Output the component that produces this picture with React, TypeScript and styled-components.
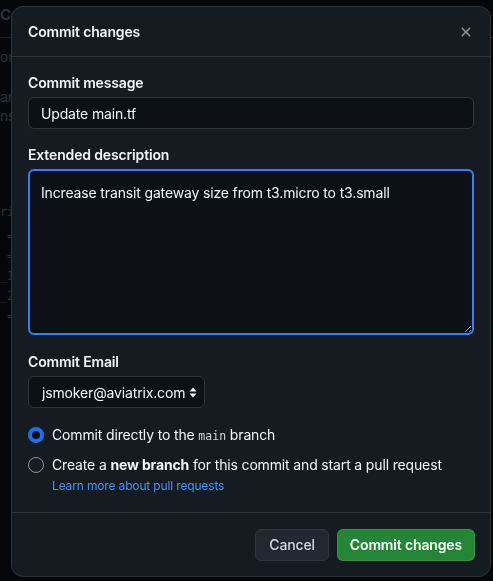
import React from "react";
import styled, { createGlobalStyle } from "styled-components";

const GlobalStyle = createGlobalStyle`
  html, body {
    margin: 0;
    padding: 0;
    background: #05070b;
    color-scheme: dark;
  }
  body {
    font-family: Inter, "Noto Sans", "Liberation Sans", sans-serif;
    letter-spacing: -0.15px;
    width: 493px;
    height: 581px;
    overflow: hidden;
  }
`;

const BgPage = styled.div`
  width: 493px;
  height: 581px;
  overflow: hidden;
  background: #05070b;
  color: #2c3139;
  display: flex;
  flex-direction: column;
  font-size: 14px;
`;

const BgTitle = styled.div`
  font-size: 15px;
  font-weight: 700;
  line-height: 20px;
  margin: 5px 0 0 0;
  white-space: nowrap;
`;

const BgRule = styled.div`
  height: 1px;
  background: #1a1e25;
  margin-top: 12px;
`;

const BgLine = styled.div<{ $top: number }>`
  margin-top: ${(p) => p.$top}px;
  line-height: 20px;
  white-space: nowrap;
`;

const BgCode = styled.div<{ $top: number }>`
  margin-top: ${(p) => p.$top}px;
  font-family: "DejaVu Sans Mono", "Liberation Mono", monospace;
  font-size: 12px;
  line-height: 20px;
  white-space: pre;
`;

const Dialog = styled.div`
  position: fixed;
  left: 11px;
  top: 6px;
  width: 480px;
  height: 571px;
  box-sizing: border-box;
  background: #161b22;
  border: 1px solid #2d333b;
  border-radius: 12px;
  display: flex;
  flex-direction: column;
  color: #f0f6fc;
  overflow: hidden;
`;

const Header = styled.div`
  display: flex;
  align-items: center;
  justify-content: space-between;
  height: 49px;
  padding: 0 16px;
  border-bottom: 1px solid #2d333b;
  flex-shrink: 0;
`;

const Title = styled.h1`
  margin: 0;
  font-size: 14px;
  font-weight: 600;
  line-height: 20px;
`;

const CloseButton = styled.button`
  width: 16px;
  height: 16px;
  padding: 0;
  border: 0;
  background: transparent;
  color: #9198a1;
  display: flex;
  align-items: center;
  justify-content: center;
  margin-top: 1px;
`;

const Body = styled.div`
  flex: 1;
  padding: 16px 16px 0 16px;
  display: flex;
  flex-direction: column;
`;

const Field = styled.div<{ $gap?: number }>`
  display: flex;
  flex-direction: column;
  margin-bottom: ${(p) => p.$gap ?? 16}px;
`;

const Label = styled.label`
  font-size: 14px;
  font-weight: 600;
  line-height: 20px;
  margin-bottom: 4px;
  color: #f0f6fc;
`;

const TextInput = styled.input`
  height: 32px;
  box-sizing: border-box;
  background: #0d1117;
  border: 1px solid #30363d;
  border-radius: 6px;
  padding: 0 12px;
  color: #f0f6fc;
  font: inherit;
  font-size: 14px;
  letter-spacing: -0.15px;
  outline: none;
`;

const TextArea = styled.textarea`
  height: 166px;
  box-sizing: border-box;
  background: #0d1117;
  border: 2px solid #2f81f7;
  border-radius: 6px;
  padding: 12px 11px;
  color: #f0f6fc;
  font: inherit;
  font-size: 14px;
  line-height: 20px;
  letter-spacing: -0.15px;
  outline: none;
  resize: vertical;
  caret-color: #f0f6fc;
`;

const Select = styled.div`
  align-self: flex-start;
  height: 32px;
  box-sizing: border-box;
  background: #0d1117;
  border: 1px solid #30363d;
  border-radius: 6px;
  padding: 0 7px 0 13px;
  display: flex;
  align-items: center;
  gap: 4px;
  font-size: 14px;
  color: #f0f6fc;
`;

const RadioRow = styled.div<{ $mb: number }>`
  display: flex;
  align-items: flex-start;
  gap: 8px;
  margin-bottom: ${(p) => p.$mb}px;
`;

const Radio = styled.span<{ $checked?: boolean }>`
  width: 16px;
  height: 16px;
  box-sizing: border-box;
  border-radius: 50%;
  margin-top: 2px;
  flex-shrink: 0;
  border: ${(p) => (p.$checked ? "4px solid #1f6feb" : "1px solid #8b919a")};
  background: ${(p) => (p.$checked ? "#0d1117" : "transparent")};
`;

const RadioText = styled.div`
  display: flex;
  flex-direction: column;
`;

const RadioLabel = styled.span`
  font-size: 14px;
  line-height: 20px;
  color: #f0f6fc;
  white-space: nowrap;
`;

const Code = styled.code`
  font-family: "DejaVu Sans Mono", "Liberation Mono", monospace;
  font-size: 11.5px;
  letter-spacing: 0;
  color: #d1d7e0;
`;

const Link = styled.a`
  font-size: 12px;
  line-height: 18px;
  margin-top: 2px;
  color: #4493f8;
  text-decoration: none;
`;

const Footer = styled.div`
  height: 64px;
  box-sizing: border-box;
  border-top: 1px solid #2d333b;
  padding: 0 15px;
  display: flex;
  align-items: center;
  justify-content: flex-end;
  gap: 8px;
  flex-shrink: 0;
`;

const Button = styled.button<{ $primary?: boolean }>`
  height: 32px;
  padding: 0 ${(p) => (p.$primary ? 12 : 13)}px;
  border-radius: 6px;
  font-family: inherit;
  letter-spacing: -0.15px;
  font-size: 14px;
  font-weight: ${(p) => (p.$primary ? 600 : 500)};
  color: ${(p) => (p.$primary ? "#ffffff" : "#d1d7e0")};
  background: ${(p) => (p.$primary ? "#238636" : "#212830")};
  border: 1px solid ${(p) => (p.$primary ? "rgba(240,246,252,0.1)" : "#30363d")};
`;

const XIcon = () => (
  <svg width="16" height="16" viewBox="0 0 16 16" fill="currentColor">
    <path d="M3.72 3.72a.75.75 0 0 1 1.06 0L8 6.94l3.22-3.22a.749.749 0 0 1 1.275.326.749.749 0 0 1-.215.734L9.06 8l3.22 3.22a.749.749 0 0 1-.326 1.275.749.749 0 0 1-.734-.215L8 9.06l-3.22 3.22a.751.751 0 0 1-1.042-.018.751.751 0 0 1-.018-1.042L6.94 8 3.72 4.78a.75.75 0 0 1 0-1.06Z" />
  </svg>
);

const UpDownIcon = () => (
  <svg width="8" height="11" viewBox="0 0 8 11" fill="#f0f6fc">
    <path d="M4 0.5 L7.5 4.5 H0.5 Z" />
    <path d="M4 10.5 L0.5 6.5 H7.5 Z" />
  </svg>
);

export default function App() {
  const taRef = React.useRef<HTMLTextAreaElement>(null);
  React.useEffect(() => {
    const el = taRef.current;
    if (el) {
      el.focus();
      const n = el.value.length;
      el.setSelectionRange(n, n);
    }
  }, []);
  return (
    <>
      <GlobalStyle />
      <BgPage aria-hidden="true">
        <BgTitle>Co</BgTitle>
        <BgRule />
        <BgLine $top={9}>om</BgLine>
        <BgLine $top={20}>am</BgLine>
        <BgLine $top={-1}>ns</BgLine>
        <BgCode $top={76}>ri</BgCode>
        <BgCode $top={4}> =</BgCode>
        <BgCode $top={0}> =</BgCode>
        <BgCode $top={0}>_1</BgCode>
        <BgCode $top={0}>_2</BgCode>
        <BgCode $top={0}> =</BgCode>
      </BgPage>
      <Dialog role="dialog">
        <Header>
          <Title>Commit changes</Title>
          <CloseButton aria-label="Close">
            <XIcon />
          </CloseButton>
        </Header>
        <Body>
          <Field>
            <Label>Commit message</Label>
            <TextInput defaultValue="Update main.tf" />
          </Field>
          <Field $gap={17}>
            <Label>Extended description</Label>
            <TextArea
              ref={taRef}
              defaultValue="Increase transit gateway size from t3.micro to t3.small"
            />
          </Field>
          <Field $gap={17}>
            <Label>Commit Email</Label>
            <Select>
              <span>jsmoker@aviatrix.com</span>
              <UpDownIcon />
            </Select>
          </Field>
          <RadioRow $mb={9}>
            <Radio $checked />
            <RadioLabel>
              Commit directly to the <Code>main</Code> branch
            </RadioLabel>
          </RadioRow>
          <RadioRow $mb={0}>
            <Radio />
            <RadioText>
              <RadioLabel>
                Create a <strong>new branch</strong> for this commit and start a pull request
              </RadioLabel>
              <Link href="#">Learn more about pull requests</Link>
            </RadioText>
          </RadioRow>
        </Body>
        <Footer>
          <Button>Cancel</Button>
          <Button $primary>Commit changes</Button>
        </Footer>
      </Dialog>
    </>
  );
}
